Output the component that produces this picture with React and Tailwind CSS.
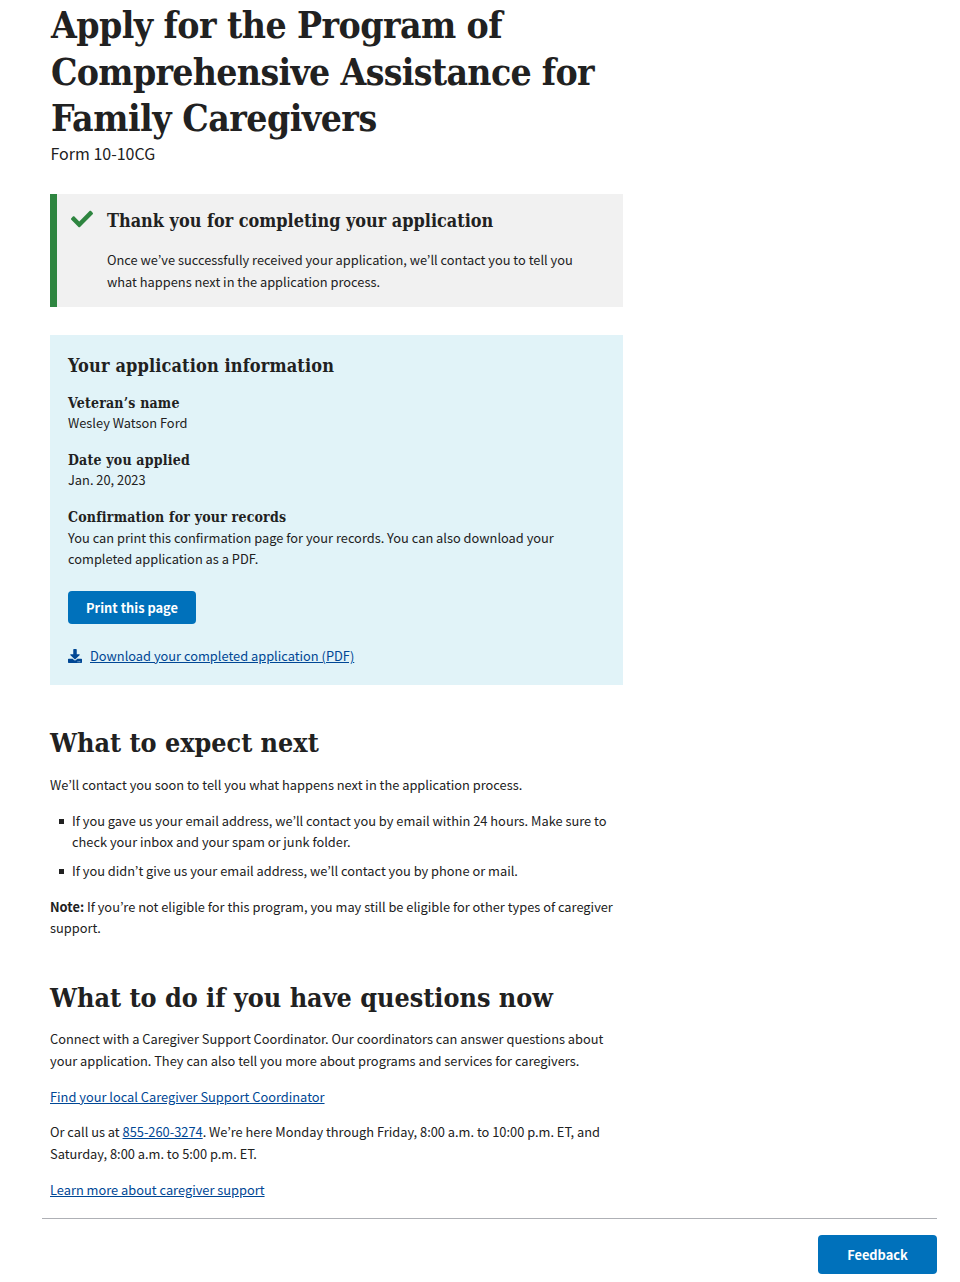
import { FaCheck, FaDownload } from 'react-icons/fa';

const serif = "font-['DejaVu_Serif_Condensed','DejaVu_Serif',serif] [font-stretch:condensed] font-bold";
const link = 'text-[#004795] underline underline-offset-1';

function Entry({ title, children }) {
  return (
    <div className="mb-[17px]">
      <h4 className={`${serif} text-[14px] leading-[21px] tracking-[0.2px]`}>{title}</h4>
      <p className="-mt-[2px] leading-[21px]">{children}</p>
    </div>
  );
}

function Bullet({ children }) {
  return (
    <li className="flex">
      <span className="mt-[9px] mr-[8px] ml-[9px] size-[5px] shrink-0 bg-[#212121]" />
      <span>{children}</span>
    </li>
  );
}

export default function App() {
  return (
    <main className="h-[1282px] w-[960px] overflow-hidden bg-white font-['Noto_Sans_CJK_KR',sans-serif] text-[12.84px] leading-[21.4px] whitespace-nowrap text-[#212121]">
      <div className="ml-[50px] h-[1218px] w-[573px]">
        <h1 className={`${serif} h-[141px] pt-[2px] pl-px text-[37px] leading-[46.6px] tracking-[-0.68px]`}>
          <span className="tracking-[-0.56px]">Apply for the Program of</span><br />Comprehensive Assistance for<br /><span className="tracking-[-0.5px]">Family Caregivers</span>
        </h1>
        <p className="h-[53px] pl-[0.5px] text-[16px] leading-[24px]">Form 10-10CG</p>

        <section className="flex h-[113px] border-l-[7px] border-[#2e8540] bg-[#f1f1f1]">
          <FaCheck className="mt-[14px] ml-[14px] size-[22px] shrink-0 text-[#2e8540]" />
          <div className="ml-[14px] pt-[13px]">
            <h2 className={`${serif} text-[17.9px] leading-[27px]`}>Thank you for completing your application</h2>
            <p className="mt-[15px] leading-[22px]">
              Once we’ve successfully received your application, we’ll contact you to tell you<br />what happens next in the application process.
            </p>
          </div>
        </section>

        <section className="mt-[28px] h-[350px] bg-[#e1f3f8] px-[18px] pt-[17px]">
          <h3 className={`${serif} mb-[14px] text-[18px] leading-[27px] tracking-[0.13px]`}>Your application information</h3>
          <Entry title="Veteran’s name">Wesley Watson Ford</Entry>
          <Entry title="Date you applied">Jan. 20, 2023</Entry>
          <Entry title="Confirmation for your records">
            <span className="block pt-px">
              You can print this confirmation page for your records. You can also download your<br />completed application as a PDF.
            </span>
          </Entry>
          <button className="mt-[22px] block h-[33px] w-[128px] rounded-[4px] bg-[#0071bb] font-bold text-white">Print this page</button>
          <a className="mt-[21px] flex items-center text-[#004795]" href="#download">
            <FaDownload className="mr-[8px] size-[14px]" />
            <span className={link}>Download your completed application (PDF)</span>
          </a>
        </section>

        <section className="pt-[40px]">
          <h2 className={`${serif} text-[26.7px] leading-[36px]`}>What to expect next</h2>
          <p className="mt-[13px]">We’ll contact you soon to tell you what happens next in the application process.</p>
          <ul className="mt-[14.4px] flex flex-col gap-[8px] leading-[21px]">
            <Bullet>If you gave us your email address, we’ll contact you by email within 24 hours. Make sure to<br />check your inbox and your spam or junk folder.</Bullet>
            <Bullet>If you didn’t give us your email address, we’ll contact you by phone or mail.</Bullet>
          </ul>
          <p className="mt-[15.6px] leading-[21px]"><b>Note:</b> If you’re not eligible for this program, you may still be eligible for other types of caregiver<br />support.</p>
        </section>

        <section className="pt-[42px]">
          <h2 className={`${serif} text-[26.7px] leading-[36px]`}>What to do if you have questions now</h2>
          <p className="mt-[12px]">Connect with a Caregiver Support Coordinator. Our coordinators can answer questions about<br />your application. They can also tell you more about programs and services for caregivers.</p>
          <p className="mt-[14.6px]"><a className={link} href="#coordinator">Find your local Caregiver Support Coordinator</a></p>
          <p className="mt-[14px]">Or call us at <a className={link} href="tel:8552603274">855-260-3274</a>. We’re here Monday through Friday, 8:00 a.m. to 10:00 p.m. ET, and<br />Saturday, 8:00 a.m. to 5:00 p.m. ET.</p>
          <p className="mt-[14.6px]"><a className={link} href="#support">Learn more about caregiver support</a></p>
        </section>
      </div>
      <footer className="mr-[23px] ml-[42px] flex justify-end border-t border-[#aeb0b5] pt-[16px]">
        <button className="h-[39px] w-[119px] rounded-[4px] bg-[#0071bb] font-bold text-white">Feedback</button>
      </footer>
    </main>
  );
}
